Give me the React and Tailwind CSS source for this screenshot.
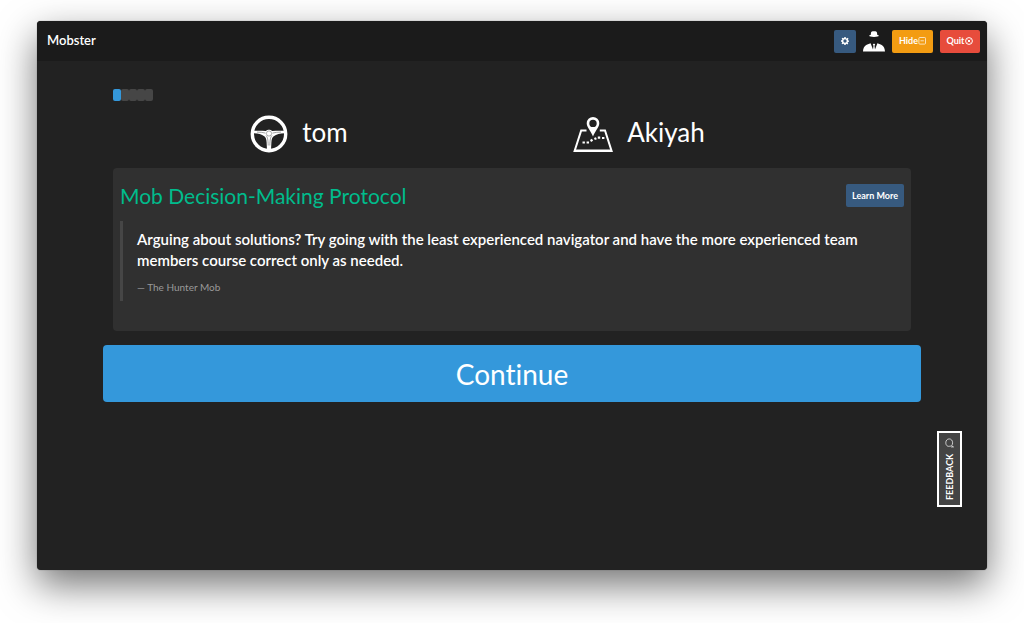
import React from "react";

function GearIcon() {
  return (
    <svg viewBox="0 0 24 24" className="size-2" fill="currentColor" aria-hidden="true">
      <path
        fillRule="evenodd"
        d="M10 0h4l.7 3.4 2 .9L19.700 2.400l2.900 2.900-2 2.900.9 2L24 10.500v4l-3.100.5-.9 2 1.900 2.700-2.900 2.800-2.700-1.900-2 .9L14 24h-4l-.7-3-2-.8-2.700 1.900-2.900-2.900 1.900-2.700-.9-2L0 14v-4l3.100-.6.9-2L2 4.700l2.900-2.800 2.700 1.900 2-.8zM12 7a5 5 0 1 0 0 10 5 5 0 0 0 0-10z"
      />
    </svg>
  );
}

function MobsterIcon() {
  return (
    <svg viewBox="0 0 22 22" className="size-[22px]" fill="#fff" role="img" aria-label="Mobster">
      <path d="M7.700 5 8 2.800C8.200 1.500 9.200 1.300 11 1.300s2.800.2 3 1.500l.3 2.200c.9.100 1.500.4 1.500.7 0 .7-2 1.200-4.800 1.200s-4.800-.5-4.800-1.200c0-.3.600-.6 1.500-.7z" />
      <path d="M7.600 13.200 10 19.500l.5-3.800-.7-1.200.7-.8h1l.7.8-.7 1.200.5 3.800 2.400-6.300c3.500 1.300 7.300 2.200 7.600 8.300H0c.3-6.100 4.100-7 7.600-8.300z" />
    </svg>
  );
}

function HideIcon() {
  return (
    <svg viewBox="0 0 8 8" className="size-2" fill="none" stroke="currentColor" strokeWidth="0.700" aria-hidden="true">
      <rect x="0.900" y="0.500" width="6.600" height="6.600" rx="0.800" />
      <path d="M2.500 3.800h3.400" />
    </svg>
  );
}

function QuitIcon() {
  return (
    <svg viewBox="0 0 8 8" className="size-2" fill="none" stroke="currentColor" strokeWidth="1" aria-hidden="true">
      <circle cx="4" cy="4" r="3.400" />
      <path d="m2.700 2.700 2.600 2.600M5.300 2.700 2.700 5.300" />
    </svg>
  );
}

function WheelIcon() {
  return (
    <svg viewBox="0 0 38 38" className="size-[38px]" role="img" aria-label="Driver">
      <circle cx="19" cy="19" r="16.700" fill="none" stroke="#fff" strokeWidth="3.400" />
      <path
        fill="#fff"
        d="M3.500 15.800c4.500-.3 8.500-.2 12.200.200 1.200-1 2.200-1.300 3.300-1.300s2.100.3 3.300 1.300c3.700-.4 7.700-.5 12.200-.200v2.400c-4.500.2-8 1-10.800 3-1.500 1.100-2.100 3-2.300 6L21 35h-4l-.4-7.800c-.2-3-.8-4.900-2.300-6-2.800-2-6.300-2.800-10.800-3z"
      />
      <circle cx="19" cy="18.500" r="2.600" fill="#fff" stroke="#777" strokeWidth="0.600" />
      <path
        fill="none"
        stroke="#666"
        strokeWidth="0.600"
        d="M7 17.100c3 0 6 .3 8.500 1M31 17.100c-3 0-6 .3-8.500 1M16 20.500c1.600 1.700 2 4 2.200 10M22 20.500c-1.600 1.700-2 4-2.200 10"
      />
    </svg>
  );
}

function MapIcon() {
  return (
    <svg viewBox="0 0 40 38" className="h-[38px] w-10" fill="none" role="img" aria-label="Navigator">
      <path d="M13.500 15.500H8.200L1.600 35.900h37L32 15.500h-5.200" stroke="#fff" strokeWidth="2" />
      <path d="M1 35.700h38" stroke="#fff" strokeWidth="2.600" />
      <path
        fill="#fff"
        fillRule="evenodd"
        d="M20 2a6.300 6.300 0 0 1 6.300 6.300c0 4-4.300 7.700-6.300 13.200-2-5.500-6.300-9.200-6.300-13.200A6.300 6.300 0 0 1 20 2zm0 2.700a3.700 3.700 0 1 0 0 7.400 3.700 3.700 0 0 0 0-7.400z"
      />
      <path
        d="M9.500 27.500h2.400M13.600 27.500H16M17.500 26l2-1.200M21.400 24.100l2-.9M24.800 22.700h2.400M29 23h2.400"
        stroke="#fff"
        strokeWidth="2.200"
      />
    </svg>
  );
}

function BubbleIcon() {
  return (
    <svg viewBox="0 0 10 10" className="size-[10px]" fill="none" stroke="#ddd" strokeWidth="0.900" aria-hidden="true">
      <path d="M9.500 8.900H7.300L6.300 8C3.500 9.200 1.800 7.200 1.800 4.800 1.800 2.500 3.200.9 5.200.9s3.400 1.600 3.400 3.900c0 1.200-.4 2.200-1.100 2.900z" />
    </svg>
  );
}

const smallButton =
  "flex h-[23px] cursor-pointer items-center justify-center rounded-[2px] text-[9px] font-bold text-white";

function Progress({ done, total }) {
  return (
    <div className="flex h-3" role="progressbar" aria-label="Rotation" aria-valuenow={done} aria-valuemax={total}>
      {Array.from({ length: total }, (_, i) => (
        <span key={i} className={`w-2 rounded-[2px] ${i < done ? "bg-[#3498db]" : "bg-[#464646]"}`} />
      ))}
    </div>
  );
}

export default function App() {
  return (
    <div className="flex min-h-screen flex-col bg-white px-[37px] pt-[21px] pb-[53px] font-['Lato',sans-serif] text-white antialiased [font-variant-ligatures:none]">
      <div className="relative flex grow flex-col rounded-[4px] bg-[#222] shadow-[0_0_1px_rgba(0,0,0,0.6),0_15px_38px_rgba(0,0,0,0.55)]">
        <header className="flex h-10 items-center justify-between rounded-t-[4px] bg-[#1b1b1b] pr-[7px] pl-[10px]">
          <span className="text-[13px] font-semibold">Mobster</span>
          <nav className="flex items-center gap-[7px]">
            <button aria-label="Settings" className={`${smallButton} w-[22px] bg-[#375a7f]`}>
              <GearIcon />
            </button>
            <MobsterIcon />
            <button className={`${smallButton} w-[41px] bg-[#f39c12]`}>
              Hide
              <HideIcon />
            </button>
            <button className={`${smallButton} w-[40px] gap-px bg-[#e74c3c]`}>
              Quit
              <QuitIcon />
            </button>
          </nav>
        </header>

        <main className="px-[66px] pt-7">
          <div className="px-[10px]">
            <Progress done={1} total={5} />
          </div>

          <div className="mt-[14px] grid grid-cols-2 pr-[112px] pl-[26px] text-[26px] leading-[34px]">
            <div className="flex items-start justify-center gap-[14px]">
              <WheelIcon />
              <span>tom</span>
            </div>
            <div className="flex items-start justify-center gap-[14px]">
              <MapIcon />
              <span>Akiyah</span>
            </div>
          </div>

          <section className="mx-[10px] mt-[15px] rounded-[4px] bg-[#303030] px-[7px] pt-4 pb-[30px]">
            <div className="flex items-start justify-between">
              <h1 className="text-[21px] leading-6 text-[#00bc8c]">Mob Decision-Making Protocol</h1>
              <button className={`${smallButton} w-[58px] bg-[#375a7f]`}>Learn More</button>
            </div>
            <blockquote className="mt-[13px] border-l-[3px] border-[#464646] pt-2 pr-[14px] pb-[7px] pl-[14px]">
              <p className="text-[15px] leading-[21px] font-semibold">
                Arguing about solutions? Try going with the least experienced navigator and have the more experienced
                team members course correct only as needed.
              </p>
              <footer className="mt-[9px] text-[10px] leading-[14px] text-[#999]">— The Hunter Mob</footer>
            </blockquote>
          </section>

          <button className="mt-[14px] block h-[57px] w-full cursor-pointer rounded-[4px] bg-[#3498db] text-[28px]">
            Continue
          </button>
        </main>

        <button className="absolute right-[25px] bottom-[63px] flex h-[76px] w-[25px] rotate-180 cursor-pointer items-center justify-center gap-[6px] border-2 border-white bg-[#444] text-[9px] font-bold [writing-mode:vertical-rl]">
          FEEDBACK
          <span className="rotate-180">
            <BubbleIcon />
          </span>
        </button>
      </div>
    </div>
  );
}
